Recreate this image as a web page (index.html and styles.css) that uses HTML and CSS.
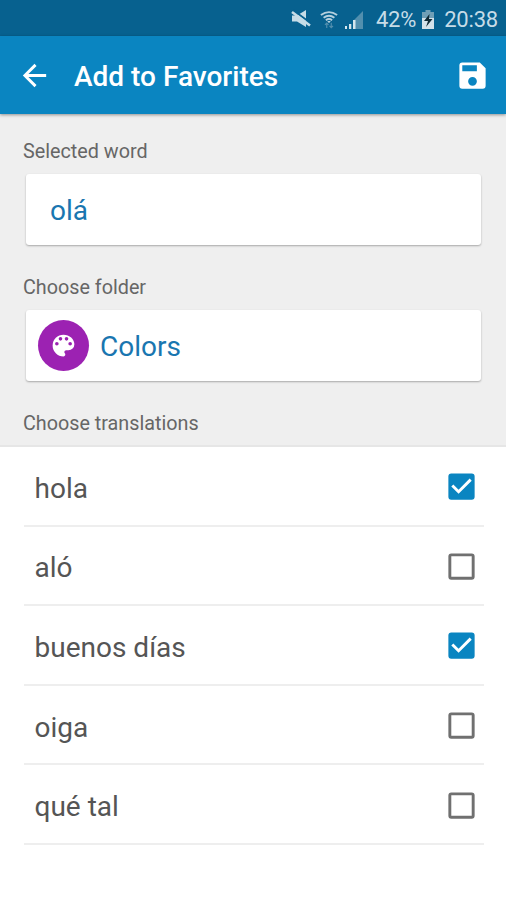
FILE: index.html
```html
<!DOCTYPE html>
<html lang="en">
<head>
<meta charset="utf-8">
<title>Add to Favorites</title>
<link rel="stylesheet" href="styles.css">
</head>
<body>
<div class="status">
  <svg class="mute" viewBox="0 0 20 20"><path d="M1 6.500h5L15 1v17l-9-5.500H1z" fill="#c6dce7"/><path d="M2 1l17.500 13" stroke="#07618f" stroke-width="2"/><path d="M1 3l18 13.500" stroke="#c6dce7" stroke-width="2.600"/></svg>
  <svg class="wifi" viewBox="0 0 20 20"><g fill="none" stroke="#b5d0de" stroke-width="2.100"><path d="M1 4.500Q10-2 19 4.500M4 7.500q6-4.500 12 0M6.500 10.200q3.500-2.500 7 0"/></g><path d="M8 11h4l-2 2.500z" fill="#b5d0de"/><path d="M7.500 19v-5M5.500 15.500l2-2 2 2M12.500 13v5M10.500 16.500l2 2 2-2" stroke="#528fae" stroke-width="1.300" fill="none"/></svg>
  <svg class="signal" viewBox="0 0 20 20"><path d="M10 10l9-9v18h-9z" fill="#528fae"/><path d="M1 16h2v3H1zM5 14h2.300v5H5zM9 10h2.500v9H9z" fill="#d4e5ed"/></svg>
  <span class="percent">42%</span>
  <svg class="battery" viewBox="0 0 14 20"><path d="M4.500 0h5v2H13v17H1V2h3.500z" fill="#6f9fb6"/><path d="M1 8h12v11H1z" fill="#d3e2ea"/><path d="M8.500 4L3 11h4l-2 6 6.500-8H8z" fill="#102a35"/></svg>
  <span class="clock">20:38</span>
</div>
<header class="appbar">
  <svg class="icon" viewBox="0 0 24 24"><path d="M20 11H7.830l5.590-5.590L12 4l-8 8 8 8 1.410-1.410L7.830 13H20v-2z"/></svg>
  <h1>Add to Favorites</h1>
  <svg class="icon" viewBox="0 0 24 24"><path d="M17 3H5a2 2 0 0 0-2 2v14a2 2 0 0 0 2 2h14a2 2 0 0 0 2-2V7l-4-4zm-5 16a3 3 0 1 1 0-6 3 3 0 0 1 0 6zm3-10H5V5h10v4z"/></svg>
</header>
<main class="form">
  <p class="label">Selected word</p>
  <div class="card word"><span>olá</span></div>
  <p class="label">Choose folder</p>
  <div class="card folder">
    <div class="avatar"><svg viewBox="0 0 24 24"><path d="M12 3a9 9 0 0 0 0 18c.830 0 1.500-.670 1.500-1.500 0-.390-.150-.740-.390-1.010-.230-.260-.380-.610-.380-.990 0-.830.670-1.500 1.500-1.500H16a5 5 0 0 0 5-5c0-4.420-4.030-8-9-8zm-5.500 9a1.500 1.500 0 1 1 0-3 1.500 1.500 0 0 1 0 3zm3-4a1.500 1.500 0 1 1 0-3 1.500 1.500 0 0 1 0 3zm5 0a1.500 1.500 0 1 1 0-3 1.500 1.500 0 0 1 0 3zm3 4a1.500 1.500 0 1 1 0-3 1.500 1.500 0 0 1 0 3z"/></svg></div>
    <span>Colors</span>
  </div>
  <p class="label">Choose translations</p>
</main>
<ul class="list">
  <li><span>hola</span><svg class="check on" viewBox="0 0 24 24"><path d="M19 3H5a2 2 0 0 0-2 2v14a2 2 0 0 0 2 2h14a2 2 0 0 0 2-2V5a2 2 0 0 0-2-2zm-9 14l-5-5 1.410-1.410L10 14.170l7.590-7.590L19 8l-9 9z"/></svg></li>
  <li><span>aló</span><svg class="check" viewBox="0 0 24 24"><path d="M19 5v14H5V5h14m0-2H5a2 2 0 0 0-2 2v14a2 2 0 0 0 2 2h14a2 2 0 0 0 2-2V5a2 2 0 0 0-2-2z"/></svg></li>
  <li><span>buenos días</span><svg class="check on" viewBox="0 0 24 24"><path d="M19 3H5a2 2 0 0 0-2 2v14a2 2 0 0 0 2 2h14a2 2 0 0 0 2-2V5a2 2 0 0 0-2-2zm-9 14l-5-5 1.410-1.410L10 14.170l7.590-7.590L19 8l-9 9z"/></svg></li>
  <li><span>oiga</span><svg class="check" viewBox="0 0 24 24"><path d="M19 5v14H5V5h14m0-2H5a2 2 0 0 0-2 2v14a2 2 0 0 0 2 2h14a2 2 0 0 0 2-2V5a2 2 0 0 0-2-2z"/></svg></li>
  <li><span>qué tal</span><svg class="check" viewBox="0 0 24 24"><path d="M19 5v14H5V5h14m0-2H5a2 2 0 0 0-2 2v14a2 2 0 0 0 2 2h14a2 2 0 0 0 2-2V5a2 2 0 0 0-2-2z"/></svg></li>
</ul>
</body>
</html>
```
FILE: styles.css
```css
* { box-sizing: border-box; }
body {
  margin: 0;
  height: 900px;
  overflow: hidden;
  background: #fff;
  font-family: Roboto, "Liberation Sans", sans-serif;
  color: #555;
}
.status {
  height: 36px;
  display: flex;
  align-items: center;
  justify-content: flex-end;
  padding: 3px 8px 0 0;
  background: #07618f;
  color: #c6dce7;
  font-size: 22px;
  letter-spacing: -.2px;
  line-height: 32px;
}
.status span { padding-top: 1px; }
.mute { width: 20px; height: 20px; margin: 0 9px 1px 0; }
.wifi { width: 18px; height: 20px; margin-right: 6px; }
.signal { width: 20px; height: 20px; margin-right: 12px; }
.battery { width: 14px; height: 20px; margin: 0 9px 0 5px; }
.appbar {
  position: relative;
  height: 78px;
  display: flex;
  align-items: center;
  padding: 0 16px 0 17px;
  background: #0a85c1;
  box-shadow: 0 1px 3px rgba(0, 0, 0, .4);
}
.appbar h1 {
  flex: 1;
  margin: 3px 0 0 22px;
  color: #fff;
  font-size: 28px;
  font-weight: 500;
  line-height: 34px;
}
.icon { width: 35px; height: 35px; fill: #fff; }
.form {
  height: 333px;
  padding: 25px 25px 0 23px;
  background: #efefef;
  border-bottom: 2px solid #e6e6e6;
}
.label {
  margin: 0;
  font-size: 19.750px;
  line-height: 26px;
  color: #666;
}
.card {
  height: 71px;
  margin: 9px 0 30px 3px;
  display: flex;
  align-items: center;
  background: #fff;
  border-radius: 3px;
  box-shadow: 0 1px 2px rgba(0, 0, 0, .3);
  color: #1976b0;
  font-size: 28px;
}
.card span { padding-top: 2px; }
.word { padding-left: 24px; }
.folder { padding-left: 12px; gap: 11px; }
.avatar {
  width: 51px;
  height: 51px;
  display: grid;
  place-items: center;
  border-radius: 50%;
  background: #9c22b2;
}
.avatar svg { width: 29px; height: 29px; fill: #fff; }
.list { margin: 0; padding: 0 22px 0 24px; list-style: none; }
.list li {
  height: 79.600px;
  display: flex;
  align-items: center;
  justify-content: space-between;
  padding: 2px 5px 0 10.500px;
  border-bottom: 2px solid #eee;
  font-size: 28px;
}
.list span { padding-top: 3px; }
.check { width: 35px; height: 35px; fill: #707070; }
.check.on { fill: #0a85c1; }
```
